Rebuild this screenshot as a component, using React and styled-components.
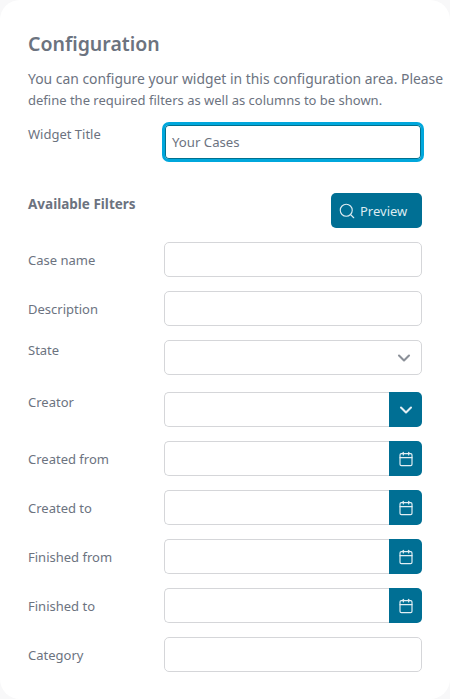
import React from 'react'
import styled, { createGlobalStyle } from 'styled-components'
import { ChevronDown, Search, Calendar } from 'lucide-react'

const GlobalStyle = createGlobalStyle`
html, body {
  margin:0;
  padding:0;
  background:#f8f8f9;
}
* {
  box-sizing:border-box;
}
`
const Card = styled.div`
width:450px;
height:699px;
overflow:hidden;
background:#ffffff;
border-radius:20px;
padding:28px 28px 0;
font-family:"Noto Sans", sans-serif;
color:#6c757d;
`
const Heading = styled.h2`
margin:0;
font-size:19.5px;
line-height:32px;
font-weight:600;
color:#6c737f;
`
const Intro = styled.p`
margin:8px 0 0;
font-size:13.9px;
line-height:21px;
white-space:nowrap;
color:#6c737f;
`
const IntroTail = styled.span`
font-size:13px;
`
const TitleRow = styled.div`
display:grid;
grid-template-columns:136px 258px;
margin-top:11px;
`
const Label = styled.label`
font-size:13px;
line-height:21px;
color:#6c737f;
padding-top:${props => props.$top}px;
`
const FocusedInput = styled.div`
height:40px;
margin-left:-2px;
width:262px;
border:3px solid #00a7dc;
border-radius:7px;
box-shadow:inset 0 0 0 1px #00718f;
padding:0 7px;
display:flex;
align-items:center;
font-size:13.2px;
color:#6c737f;
`
const FiltersHead = styled.div`
display:flex;
justify-content:space-between;
align-items:flex-start;
margin-top:31px;
`
const FiltersTitle = styled.h3`
margin:0;
padding-top:1px;
font-size:13.5px;
line-height:20px;
font-weight:700;
color:#6c737f;
`
const PreviewButton = styled.button`
width:91px;
height:35px;
border:none;
border-radius:5px;
background:#006f94;
color:#dcebf1;
display:flex;
align-items:center;
gap:4px;
padding:0 0 0 7px;
font-family:inherit;
font-size:13px;
`
const Form = styled.div`
margin-top:14px;
display:flex;
flex-direction:column;
`
const Row = styled.div`
display:grid;
grid-template-columns:136px 258px;
margin-bottom:${props => props.$gap}px;
`
const Control = styled.div`
height:35px;
display:flex;
align-items:stretch;
`
const Field = styled.div`
flex:1;
display:flex;
align-items:center;
justify-content:flex-end;
padding-right:7px;
color:#8b9098;
border:1px solid #d5d6d9;
border-radius:${props => props.$joined ? '5px 0 0 5px' : '5px'};
border-right:${props => props.$joined ? 'none' : '1px solid #d5d6d9'};
`
const AddonButton = styled.div`
width:33px;
background:#006f94;
color:#e3eff4;
border-radius:0 5px 5px 0;
display:flex;
align-items:center;
justify-content:center;
`

const filters = [
    { name: 'Case name', top: 8, gap: 14 },
    { name: 'Description', top: 8, gap: 14 },
    { name: 'State', top: 0, gap: 17, arrow: true },
    { name: 'Creator', top: 0, gap: 14, addon: 'select' },
    { name: 'Created from', top: 8, gap: 14, addon: 'date' },
    { name: 'Created to', top: 8, gap: 14, addon: 'date' },
    { name: 'Finished from', top: 8, gap: 14, addon: 'date' },
    { name: 'Finished to', top: 8, gap: 14, addon: 'date' },
    { name: 'Category', top: 8, gap: 14 },
]

const App = () => {
    return (
        <>
            <GlobalStyle />
            <Card>
                <Heading>Configuration</Heading>
                <Intro>
                    You can configure your widget in this configuration area. Please<br />
                    <IntroTail>define the required filters as well as columns to be shown.</IntroTail>
                </Intro>
                <TitleRow>
                    <Label $top={2}>Widget Title</Label>
                    <FocusedInput>Your Cases</FocusedInput>
                </TitleRow>
                <FiltersHead>
                    <FiltersTitle>Available Filters</FiltersTitle>
                    <PreviewButton>
                        <Search size={18} strokeWidth={1.5} />
                        Preview
                    </PreviewButton>
                </FiltersHead>
                <Form>
                    {filters.map(f => (
                        <Row key={f.name} $gap={f.gap}>
                            <Label $top={f.top}>{f.name}</Label>
                            <Control>
                                <Field $joined={!!f.addon}>
                                    {f.arrow && <ChevronDown size={20} strokeWidth={2.5} />}
                                </Field>
                                {f.addon && (
                                    <AddonButton>
                                        {f.addon === 'select'
                                            ? <ChevronDown size={20} strokeWidth={2.5} />
                                            : <Calendar size={16} strokeWidth={1.75} />}
                                    </AddonButton>
                                )}
                            </Control>
                        </Row>
                    ))}
                </Form>
            </Card>
        </>
    )
}

export default App
